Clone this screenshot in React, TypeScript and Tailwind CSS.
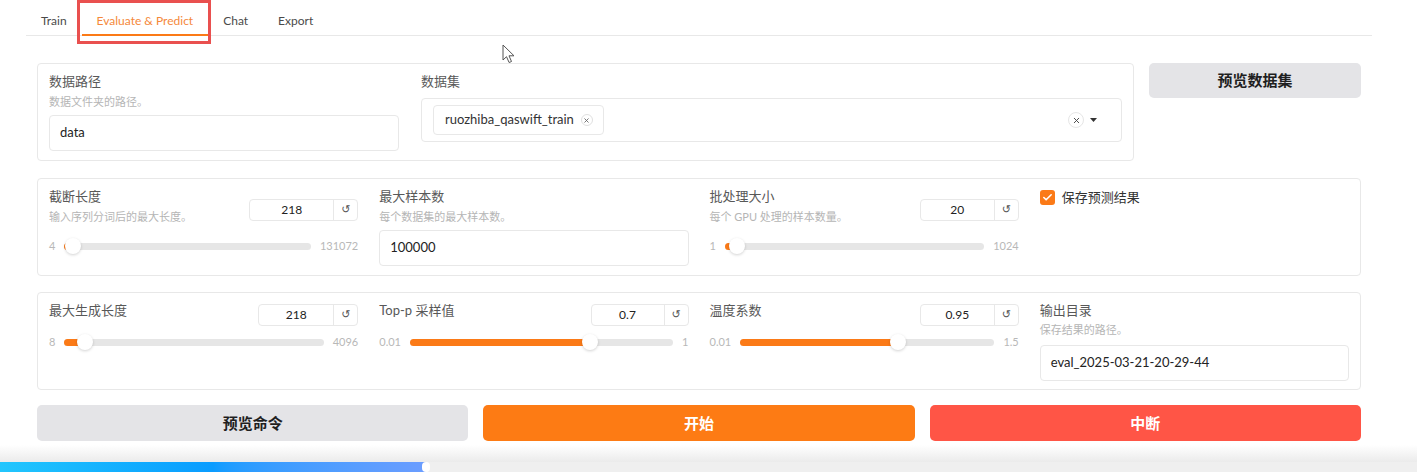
import { Check, X } from 'lucide-react';

interface SliderProps {
  min: number;
  max: number;
  value: number;
  minLabel: string;
  maxLabel: string;
}

function Slider({ min, max, value, minLabel, maxLabel }: SliderProps) {
  const pct = (value - min) / (max - min);
  return (
    <div className="flex h-[16px] items-center gap-[9px] text-[11px] leading-[16px] text-[#b8b8b8]">
      <span>{minLabel}</span>
      <div className="relative h-[7px] flex-1 rounded-full bg-[#e6e6e6]">
        <div
          className="absolute inset-y-0 left-0 rounded-full bg-[#fb7a17]"
          style={{ width: `calc(8px + ${pct} * (100% - 16px))` }}
        />
        <div
          className="absolute top-1/2 h-[16px] w-[16px] -translate-y-1/2 rounded-full bg-white shadow-[0_1px_3px_rgba(0,0,0,0.18)]"
          style={{ left: `calc(${pct} * (100% - 16px))` }}
        />
      </div>
      <span>{maxLabel}</span>
    </div>
  );
}

function NumberBox({ value, width, top }: { value: string; width: string; top: string }) {
  return (
    <div className={`${top} flex h-[22px] shrink-0 rounded-[4px] border border-[#e8e8e8] bg-white text-[12px] text-[#222]`}>
      <div className={`${width} flex items-center justify-center`}>{value}</div>
      <div className="flex w-[24px] items-center justify-center border-l border-[#e8e8e8] font-['DejaVu_Sans',sans-serif] text-[11px] text-[#555]">
        ↺
      </div>
    </div>
  );
}

interface SliderFieldProps {
  label: string;
  info?: string;
  value: string;
  num: number;
  min: number;
  max: number;
  minLabel: string;
  maxLabel: string;
  width: string;
  top: string;
  sliderTop: string;
}

function SliderField(p: SliderFieldProps) {
  return (
    <div>
      <div className="flex items-start justify-between">
        <div>
          <div className="text-[13px] leading-[18px] text-[#585858]">{p.label}</div>
          {p.info && <div className="mt-[4px] text-[11px] leading-[16px] text-[#b5b5b5]">{p.info}</div>}
        </div>
        <NumberBox value={p.value} width={p.width} top={p.top} />
      </div>
      <div className={p.sliderTop}>
        <Slider min={p.min} max={p.max} value={p.num} minLabel={p.minLabel} maxLabel={p.maxLabel} />
      </div>
    </div>
  );
}

function TextField({ label, info, value, inputTop }: { label: string; info: string; value: string; inputTop: string }) {
  return (
    <div>
      <div className="text-[13px] leading-[18px] text-[#585858]">{label}</div>
      <div className="mt-[4px] text-[11px] leading-[16px] text-[#b5b5b5]">{info}</div>
      <div className={`${inputTop} flex h-[36px] items-center rounded-[4px] border border-[#e8e8e8] px-[10px] text-[13px] text-[#222]`}>
        {value}
      </div>
    </div>
  );
}

const tabs = ['Train', 'Evaluate & Predict', 'Chat', 'Export'];

export default function App() {
  return (
    <div className="relative h-[472px] w-[1417px] overflow-hidden bg-white font-['Lato','Noto_Sans_CJK_SC',sans-serif]">
      {/* tabs */}
      <div className="ml-[26px] flex h-[36px] w-[1346px] border-b border-[#e8e8e8]">
        {tabs.map((t) => (
          <div
            key={t}
            className={`relative px-[15px] pt-[12px] text-[12px] leading-[18px] ${
              t === 'Evaluate & Predict' ? 'text-[#f5883a]' : 'text-[#4a4a4a]'
            }`}
          >
            {t}
            {t === 'Evaluate & Predict' && (
              <span className="absolute bottom-[-1px] left-0 right-0 h-[2px] bg-[#fb7a17]" />
            )}
          </div>
        ))}
      </div>

      <div className="mx-[37px] mt-[27px] w-[1324px]">
        {/* row 1 */}
        <div className="flex items-start gap-[15px]">
          <div className="grid flex-1 grid-cols-[350px_1fr] gap-x-[22px] rounded-[4px] border border-[#e8e8e8] px-[11px] pb-[9px] pt-[8px]">
            <TextField label="数据路径" info="数据文件夹的路径。" value="data" inputTop="mt-[5px]" />
            <div>
              <div className="text-[13px] leading-[18px] text-[#585858]">数据集</div>
              <div className="mt-[8px] flex h-[44px] items-center rounded-[4px] border border-[#e8e8e8] pl-[11px] pr-[24px]">
                <div className="flex h-[30px] items-center gap-[7px] rounded-[4px] border border-[#e8e8e8] pl-[11px] pr-[10px] text-[13px] text-[#333]">
                  ruozhiba_qaswift_train
                  <span className="flex h-[12px] w-[12px] items-center justify-center rounded-full border border-[#e0e0e0]">
                    <X className="h-[7px] w-[7px] text-[#666]" strokeWidth={3} />
                  </span>
                </div>
                <div className="ml-auto flex items-center gap-[6px]">
                  <span className="flex h-[16px] w-[16px] items-center justify-center rounded-full border border-[#e6e6e6]">
                    <X className="h-[9px] w-[9px] text-[#444]" strokeWidth={2.5} />
                  </span>
                  <svg width="7" height="4" viewBox="0 0 7 4">
                    <path d="M0 0h7L3.5 4z" fill="#333" />
                  </svg>
                </div>
              </div>
            </div>
          </div>
          <div className="flex h-[35px] w-[212px] items-center justify-center rounded-[5px] bg-[#e4e4e7] text-[15px] font-bold text-[#1f1f1f]">
            预览数据集
          </div>
        </div>

        {/* row 2 */}
        <div className="mt-[17px] grid grid-cols-4 gap-x-[21px] rounded-[4px] border border-[#e8e8e8] px-[11px] pb-[9px] pt-[8px]">
          <SliderField
            label="截断长度"
            info="输入序列分词后的最大长度。"
            value="218"
            num={218}
            min={4}
            max={131072}
            minLabel="4"
            maxLabel="131072"
            width="w-[83px]"
            top="mt-[12px]"
            sliderTop="mt-[13px]"
          />
          <TextField label="最大样本数" info="每个数据集的最大样本数。" value="100000" inputTop="mt-[5px]" />
          <SliderField
            label="批处理大小"
            info="每个 GPU 处理的样本数量。"
            value="20"
            num={20}
            min={1}
            max={1024}
            minLabel="1"
            maxLabel="1024"
            width="w-[73px]"
            top="mt-[12px]"
            sliderTop="mt-[13px]"
          />
          <div className="mt-[1px] flex items-center gap-[7px] self-start">
            <span className="flex h-[15px] w-[15px] items-center justify-center rounded-[3px] bg-[#fb7a17]">
              <Check className="h-[11px] w-[11px] text-white" strokeWidth={3.5} />
            </span>
            <span className="text-[13px] leading-[18px] text-[#333]">保存预测结果</span>
          </div>
        </div>

        {/* row 3 */}
        <div className="mt-[16px] grid grid-cols-4 gap-x-[21px] rounded-[4px] border border-[#e8e8e8] px-[11px] pb-[8px] pt-[8px]">
          <SliderField
            label="最大生成长度"
            value="218"
            num={218}
            min={8}
            max={4096}
            minLabel="8"
            maxLabel="4096"
            width="w-[74px]"
            top="mt-[3px]"
            sliderTop="mt-[8px]"
          />
          <SliderField
            label="Top-p 采样值"
            value="0.7"
            num={0.7}
            min={0.01}
            max={1}
            minLabel="0.01"
            maxLabel="1"
            width="w-[72px]"
            top="mt-[3px]"
            sliderTop="mt-[8px]"
          />
          <SliderField
            label="温度系数"
            value="0.95"
            num={0.95}
            min={0.01}
            max={1.5}
            minLabel="0.01"
            maxLabel="1.5"
            width="w-[73px]"
            top="mt-[3px]"
            sliderTop="mt-[8px]"
          />
          <div>
            <div className="text-[13px] leading-[18px] text-[#585858]">输出目录</div>
            <div className="mt-[3px] text-[11px] leading-[16px] text-[#b5b5b5]">保存结果的路径。</div>
            <div className="mt-[7px] flex h-[36px] items-center rounded-[4px] border border-[#e8e8e8] px-[10px] text-[13px] text-[#222]">
              eval_2025-03-21-20-29-44
            </div>
          </div>
        </div>

        {/* actions */}
        <div className="mt-[15px] grid grid-cols-3 gap-x-[15px]">
          <div className="flex h-[36px] items-center justify-center rounded-[5px] bg-[#e4e4e7] text-[15px] font-bold text-[#1f1f1f]">
            预览命令
          </div>
          <div className="flex h-[36px] items-center justify-center rounded-[5px] bg-[#fd7b14] text-[15px] font-bold text-white">
            开始
          </div>
          <div className="flex h-[36px] items-center justify-center rounded-[5px] bg-[#ff5546] text-[15px] font-bold text-white">
            中断
          </div>
        </div>
      </div>

      {/* annotation box over the active tab */}
      <div className="absolute left-[77px] top-0 h-[44px] w-[134px] border-[3px] border-[#e9504f]" />

      {/* mouse cursor */}
      <svg className="absolute left-[502px] top-[44px]" width="14" height="20" viewBox="0 0 14 20">
        <path d="M1 1v15l3.5-3.3 2.6 5.8 2.4-1-2.5-5.7H12z" fill="#fff" stroke="#555" strokeWidth="1" strokeLinejoin="round" />
      </svg>

      {/* video player bar */}
      <div className="absolute inset-x-0 bottom-0">
        <div className="h-[17px] bg-gradient-to-b from-white to-[#ebebeb]" />
        <div className="relative h-[10px] bg-[#efefef]">
          <div className="absolute inset-y-0 left-0 w-[426px] bg-gradient-to-r from-[#22c6fd] via-[#0a9cff] to-[#6b9dff]" />
          <div className="absolute left-[422px] top-0 h-[10px] w-[8px] rounded-full bg-white" />
        </div>
      </div>
    </div>
  );
}
